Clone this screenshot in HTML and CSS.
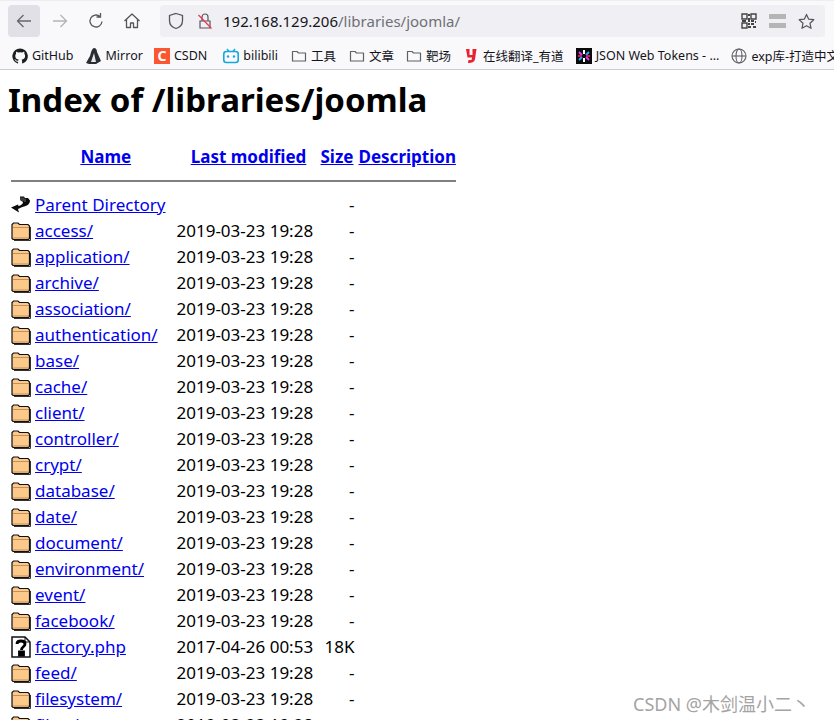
FILE: index.html
```html
<!DOCTYPE html>
<html lang="en">
<head>
<meta charset="utf-8">
<title>Index of /libraries/joomla</title>
<link rel="stylesheet" href="styles.css">
</head>
<body>
<svg class="defs" width="0" height="0" aria-hidden="true">
  <defs>
    <symbol id="dir" viewBox="0 0 20 20">
      <path d="M1 5.5V3.5L2.5 2H7L8.5 3.5H17L18.5 5V17.5L17.5 18.5H2L1 17.5Z" fill="#fdc98b" stroke="#111" stroke-width="1.2"/>
      <path d="M1.5 6.5H18M2.5 17H17.5" stroke="#8a5a25" stroke-width="1" stroke-dasharray="1 1" fill="none"/>
      <path d="M19.5 6V19.5H3" stroke="#333" stroke-width="1" fill="none"/>
    </symbol>
    <symbol id="folder" viewBox="0 0 16 16">
      <path d="M1.5 13V3.5H6L7.5 5H14.500V13Z" fill="none" stroke="#5f5f66" stroke-width="1.200" stroke-linejoin="round"/>
    </symbol>
  </defs>
</svg>
<header class="chrome">
  <div class="toolbar">
    <button class="nav nav-active" aria-label="Back">
      <svg width="18" height="18" viewBox="0 0 18 18"><path d="M16 9H2.500M8.500 3L2.500 9L8.500 15" fill="none" stroke="#66666c" stroke-width="1.300"/></svg>
    </button>
    <button class="nav" aria-label="Forward">
      <svg width="18" height="18" viewBox="0 0 18 18"><path d="M2 9H15.500M9.500 3L15.500 9L9.500 15" fill="none" stroke="#b4b4b8" stroke-width="1.300"/></svg>
    </button>
    <button class="nav" aria-label="Reload">
      <svg width="18" height="18" viewBox="0 0 18 18"><path d="M15 9.500A6 6 0 1 1 13 4.500M13.500 1V5H9.500" fill="none" stroke="#55555b" stroke-width="1.300"/></svg>
    </button>
    <button class="nav" aria-label="Home">
      <svg width="18" height="18" viewBox="0 0 18 18"><path d="M1.500 9L9 2L16.500 9M3.500 7.500V15.500H7.500V11H10.500V15.500H14.500V7.500" fill="none" stroke="#55555b" stroke-width="1.300" stroke-linejoin="round"/></svg>
    </button>
    <div class="urlbar">
      <svg class="shield" width="16" height="18" viewBox="0 0 16 18"><path d="M8 1.500L14.500 3.500V8.500C14.500 12.500 11.500 15.500 8 16.500C4.500 15.500 1.500 12.500 1.500 8.500V3.500Z" fill="none" stroke="#55555b" stroke-width="1.300"/></svg>
      <svg class="lock" width="16" height="18" viewBox="0 0 16 18"><path d="M3 9H13V16H3ZM5 9V5A3 3 0 0 1 11 5V9" fill="none" stroke="#55555b" stroke-width="1.200"/><path d="M1.500 3L14.500 16.500" stroke="#ea3a58" stroke-width="1.300"/></svg>
      <span class="url"><span class="host">192.168.129.206</span>/libraries/joomla/</span>
      <span class="url-icons">
        <svg width="16" height="16" viewBox="0 0 16 16"><path d="M1 1H6V6H1ZM10 1H15V6H10ZM1 10H6V15H1Z" fill="none" stroke="#444" stroke-width="1.400"/><path d="M7 1H9V3H7ZM7 5H9V9H7ZM1 7H5V9H1ZM10 7H13V9H10ZM14 8H15V10H14ZM7 10H9V12H7ZM10 10H13V12H10ZM7 13H10V15H7ZM12 13H15V15H12Z" fill="#444"/></svg>
        <span class="reader"></span>
        <svg width="17" height="17" viewBox="0 0 18 18"><path d="M9 1.500L11.300 6.500L16.700 7.100L12.700 10.800L13.800 16.200L9 13.500L4.200 16.200L5.300 10.800L1.300 7.100L6.700 6.500Z" fill="none" stroke="#55555b" stroke-width="1.300" stroke-linejoin="round"/></svg>
      </span>
    </div>
  </div>
  <nav class="bookmarks">
    <a class="bm bm-github"><svg width="16" height="16" viewBox="0 0 16 16"><path d="M8 .5a7.700 7.700 0 0 0-2.400 15c.4.100.5-.2.500-.4v-1.400c-2.100.5-2.600-.9-2.600-.9-.3-.9-.8-1.100-.8-1.100-.7-.5.100-.5.100-.5.800.1 1.200.8 1.200.8.700 1.200 1.800.8 2.300.6.100-.5.300-.8.500-1-1.700-.2-3.500-.9-3.500-3.800 0-.8.300-1.500.8-2-.1-.2-.3-1 .1-2 0 0 .6-.2 2.100.8a7 7 0 0 1 3.800 0c1.500-1 2.100-.8 2.100-.8.400 1 .2 1.800.1 2 .5.500.8 1.200.8 2 0 2.900-1.800 3.600-3.500 3.800.3.200.5.700.5 1.400v2.100c0 .2.100.5.500.4A7.700 7.700 0 0 0 8 .5Z" fill="#1b1f23"/></svg>GitHub</a>
    <a class="bm bm-mirror"><svg width="17" height="18" viewBox="0 0 17 18"><path d="M9 1C11 1 12 3 12 5L16 14L11 17H4L1 16L5 9C6 7 6 2 9 1Z" fill="#2a2d33"/><path d="M9 6L11 15H6Z" fill="#e8e8ea"/></svg>Mirror</a>
    <a class="bm bm-csdn"><span class="csdn-icon">C</span>CSDN</a>
    <a class="bm bm-bili"><svg width="16" height="16" viewBox="0 0 16 16"><rect x=".8" y="3.500" width="14.400" height="11" rx="2.500" fill="none" stroke="#14a7e0" stroke-width="1.600"/><path d="M4 1L6 3.500M12 1L10 3.500" stroke="#14a7e0" stroke-width="1.400"/><circle cx="5" cy="8.500" r="1.200" fill="#14a7e0"/><circle cx="11" cy="8.500" r="1.200" fill="#14a7e0"/></svg>bilibili</a>
    <a class="bm bm-f1"><svg width="16" height="16"><use href="#folder"/></svg>工具</a>
    <a class="bm bm-f2"><svg width="16" height="16"><use href="#folder"/></svg>文章</a>
    <a class="bm bm-f3"><svg width="16" height="16"><use href="#folder"/></svg>靶场</a>
    <a class="bm bm-you"><svg width="12" height="14" viewBox="0 0 12 14"><path d="M1 0H4.500V6H7.500V0H11.500L10 10C9.500 13 7 14 3 14L3.500 11H6.500L7 8.500H2.500Z" fill="#e9222f"/></svg>在线翻译_有道</a>
    <a class="bm bm-jwt"><svg width="16" height="16" viewBox="0 0 16 16"><rect width="16" height="16" fill="#0a0a0a"/><path d="M8 2V6M8 10V14" stroke="#fff" stroke-width="2"/><path d="M3 4L6 7M13 12L10 9" stroke="#d63aff" stroke-width="2"/><path d="M13 4L10 7M3 12L6 9" stroke="#00b9f1" stroke-width="2"/><path d="M2 8H6M10 8H14" stroke="#fb015b" stroke-width="2"/></svg>JSON Web Tokens - ...</a>
    <a class="bm bm-exp"><svg width="16" height="16" viewBox="0 0 16 16"><g fill="none" stroke="#5f5f66" stroke-width="1.100"><circle cx="8" cy="8" r="7"/><ellipse cx="8" cy="8" rx="3" ry="7"/><path d="M1 8H15"/></g></svg>exp库-打造中文</a>
  </nav>
</header>
<main class="page">
  <h1>Index of /libraries/joomla</h1>
  <table class="listing">
    <thead>
      <tr class="head">
        <th class="c-icon"></th>
        <th class="c-name"><a href="#">Name</a></th>
        <th class="c-date"><a href="#">Last modified</a></th>
        <th class="c-size"><a href="#">Size</a></th>
        <th class="c-desc"><a href="#">Description</a></th>
      </tr>
      <tr><th colspan="5" class="rule-cell"><hr></th></tr>
    </thead>
    <tbody>
      <tr><td class="c-icon"><svg class="ic" width="20" height="20" viewBox="0 0 20 20"><path d="M9 1.500H13L14 3H17L19 5.500C19 9 16 11 13 11.500C11 12 8 13.500 7 14L8 17.500L0 12.500L7 9.500L7.500 11C10 10.500 12 9 12 7L9 5Z" fill="#0c0c0c"/><path d="M10 2.500V5.500M12 2.500V6M14 3.500V7" stroke="#8a8a8a" stroke-width=".8"/></svg></td><td><a href="#">Parent Directory</a></td><td></td><td class="c-size">-</td><td></td></tr>
      <tr><td class="c-icon"><svg class="ic" width="20" height="20"><use href="#dir"/></svg></td><td><a href="#">access/</a></td><td>2019-03-23 19:28</td><td class="c-size">-</td><td></td></tr>
      <tr><td class="c-icon"><svg class="ic" width="20" height="20"><use href="#dir"/></svg></td><td><a href="#">application/</a></td><td>2019-03-23 19:28</td><td class="c-size">-</td><td></td></tr>
      <tr><td class="c-icon"><svg class="ic" width="20" height="20"><use href="#dir"/></svg></td><td><a href="#">archive/</a></td><td>2019-03-23 19:28</td><td class="c-size">-</td><td></td></tr>
      <tr><td class="c-icon"><svg class="ic" width="20" height="20"><use href="#dir"/></svg></td><td><a href="#">association/</a></td><td>2019-03-23 19:28</td><td class="c-size">-</td><td></td></tr>
      <tr><td class="c-icon"><svg class="ic" width="20" height="20"><use href="#dir"/></svg></td><td><a href="#">authentication/</a></td><td>2019-03-23 19:28</td><td class="c-size">-</td><td></td></tr>
      <tr><td class="c-icon"><svg class="ic" width="20" height="20"><use href="#dir"/></svg></td><td><a href="#">base/</a></td><td>2019-03-23 19:28</td><td class="c-size">-</td><td></td></tr>
      <tr><td class="c-icon"><svg class="ic" width="20" height="20"><use href="#dir"/></svg></td><td><a href="#">cache/</a></td><td>2019-03-23 19:28</td><td class="c-size">-</td><td></td></tr>
      <tr><td class="c-icon"><svg class="ic" width="20" height="20"><use href="#dir"/></svg></td><td><a href="#">client/</a></td><td>2019-03-23 19:28</td><td class="c-size">-</td><td></td></tr>
      <tr><td class="c-icon"><svg class="ic" width="20" height="20"><use href="#dir"/></svg></td><td><a href="#">controller/</a></td><td>2019-03-23 19:28</td><td class="c-size">-</td><td></td></tr>
      <tr><td class="c-icon"><svg class="ic" width="20" height="20"><use href="#dir"/></svg></td><td><a href="#">crypt/</a></td><td>2019-03-23 19:28</td><td class="c-size">-</td><td></td></tr>
      <tr><td class="c-icon"><svg class="ic" width="20" height="20"><use href="#dir"/></svg></td><td><a href="#">database/</a></td><td>2019-03-23 19:28</td><td class="c-size">-</td><td></td></tr>
      <tr><td class="c-icon"><svg class="ic" width="20" height="20"><use href="#dir"/></svg></td><td><a href="#">date/</a></td><td>2019-03-23 19:28</td><td class="c-size">-</td><td></td></tr>
      <tr><td class="c-icon"><svg class="ic" width="20" height="20"><use href="#dir"/></svg></td><td><a href="#">document/</a></td><td>2019-03-23 19:28</td><td class="c-size">-</td><td></td></tr>
      <tr><td class="c-icon"><svg class="ic" width="20" height="20"><use href="#dir"/></svg></td><td><a href="#">environment/</a></td><td>2019-03-23 19:28</td><td class="c-size">-</td><td></td></tr>
      <tr><td class="c-icon"><svg class="ic" width="20" height="20"><use href="#dir"/></svg></td><td><a href="#">event/</a></td><td>2019-03-23 19:28</td><td class="c-size">-</td><td></td></tr>
      <tr><td class="c-icon"><svg class="ic" width="20" height="20"><use href="#dir"/></svg></td><td><a href="#">facebook/</a></td><td>2019-03-23 19:28</td><td class="c-size">-</td><td></td></tr>
      <tr><td class="c-icon"><svg class="ic" width="20" height="22" viewBox="0 0 20 22"><path d="M1 1H14L19 6V21H1Z" fill="#fff" stroke="#111" stroke-width="1.500"/><path d="M14 1V6H19" fill="none" stroke="#111"/><path d="M6 8C6 4 14 4 14 8C14 11 10.500 10.500 10.500 14M8.500 16H12.500V19H8.500Z" fill="none" stroke="#000" stroke-width="2.800"/></svg></td><td><a href="#">factory.php</a></td><td>2017-04-26 00:53</td><td class="c-size">18K</td><td></td></tr>
      <tr><td class="c-icon"><svg class="ic" width="20" height="20"><use href="#dir"/></svg></td><td><a href="#">feed/</a></td><td>2019-03-23 19:28</td><td class="c-size">-</td><td></td></tr>
      <tr><td class="c-icon"><svg class="ic" width="20" height="20"><use href="#dir"/></svg></td><td><a href="#">filesystem/</a></td><td>2019-03-23 19:28</td><td class="c-size">-</td><td></td></tr>
      <tr><td class="c-icon"><svg class="ic" width="20" height="20"><use href="#dir"/></svg></td><td><a href="#">filter/</a></td><td>2019-03-23 19:28</td><td class="c-size">-</td><td></td></tr>
    </tbody>
  </table>
</main>
<div class="watermark">CSDN @木剑温小二丶</div>
</body>
</html>
```
FILE: styles.css
```css
* { box-sizing: border-box; }
html, body { margin: 0; padding: 0; height: 720px; overflow: hidden; background: #fff; }
body { font-family: "Noto Sans", "Noto Sans CJK SC", sans-serif; color: #000; }
.defs { position: absolute; }

.chrome { height: 70px; background: #f9f9fb; border-bottom: 1px solid #ccc; border-top: 1px solid #eeeef0; }
.toolbar { height: 41px; display: flex; align-items: flex-start; padding: 4px 9px 0 8px; gap: 4px; }
.nav { width: 32px; height: 32px; flex: none; border: 0; border-radius: 4px; background: transparent; padding: 0; display: flex; align-items: center; justify-content: center; }
.nav-active { background: #e0e0e6; }
.urlbar { flex: 1; height: 32px; margin-left: 8px; background: #f0f0f4; border-radius: 4px; display: flex; align-items: center; padding: 0 10px 0 8px; }
.shield { margin-right: 13px; }
.lock { margin-right: 10px; }
.url { font-size: 15px; color: #6f6f76; white-space: nowrap; }
.host { color: #15141a; }
.url-icons { margin-left: auto; display: flex; align-items: center; gap: 12px; }
.reader { width: 16px; height: 14px; background: linear-gradient(#b5b5b5 0 5px, transparent 5px 9px, #b5b5b5 9px); width: 17px; }

.bookmarks { height: 27px; display: flex; align-items: center; padding-left: 12px; font-size: 12.500px; color: #15141a; white-space: nowrap; overflow: hidden; }
.bm { display: flex; align-items: center; gap: 4px; flex: none; }
.bm-mirror { margin-left: 11px; }
.bm-csdn { margin-left: 11px; }
.bm-bili { margin-left: 16px; }
.bm-f1 { margin-left: 13px; }
.bm-f2 { margin-left: 13px; }
.bm-f3 { margin-left: 12px; }
.bm-you { margin-left: 14px; gap: 6px; }
.bm-jwt { margin-left: 12px; }
.bm-exp { margin-left: 12px; }
.csdn-icon { width: 16px; height: 16px; background: #fc5531; color: #fff; font-size: 14px; font-weight: 700; line-height: 16px; text-align: center; }

.page { padding: 0 8px; }
h1 { margin: 0; padding-top: 7px; font-size: 33px; line-height: 45px; font-weight: 700; }
.listing { margin-top: 22px; border-collapse: separate; border-spacing: 0; font-size: 17px; line-height: 26px; }
.listing td, .listing th { padding: 0; white-space: nowrap; height: 26px; }
.listing a { color: #0000ee; text-decoration: underline; }
.c-icon { width: 27px; padding-left: 3px !important; vertical-align: middle; }
.ic { display: block; }
.c-name { width: 129px; text-align: center; }
.c-date { width: 144px; }
.c-size { width: 30px; text-align: center; }
.c-desc { width: 92px; text-align: right; }
th.c-size { text-align: right; padding-right: 5px !important; width: 35px; }
td.c-size { text-align: right; padding-right: 4px !important; }
.listing td:nth-child(2) { padding-right: 11px; }
.rule-cell { padding: 0 0 0 3px !important; height: 22px !important; vertical-align: top; }
.rule-cell hr { margin: 10px 0 0; border: 0; height: 2px; background: #808080; }
.watermark { position: absolute; left: 633px; top: 690px; font-size: 18px; color: #9a9a9a; opacity: .9; white-space: nowrap; }
```
